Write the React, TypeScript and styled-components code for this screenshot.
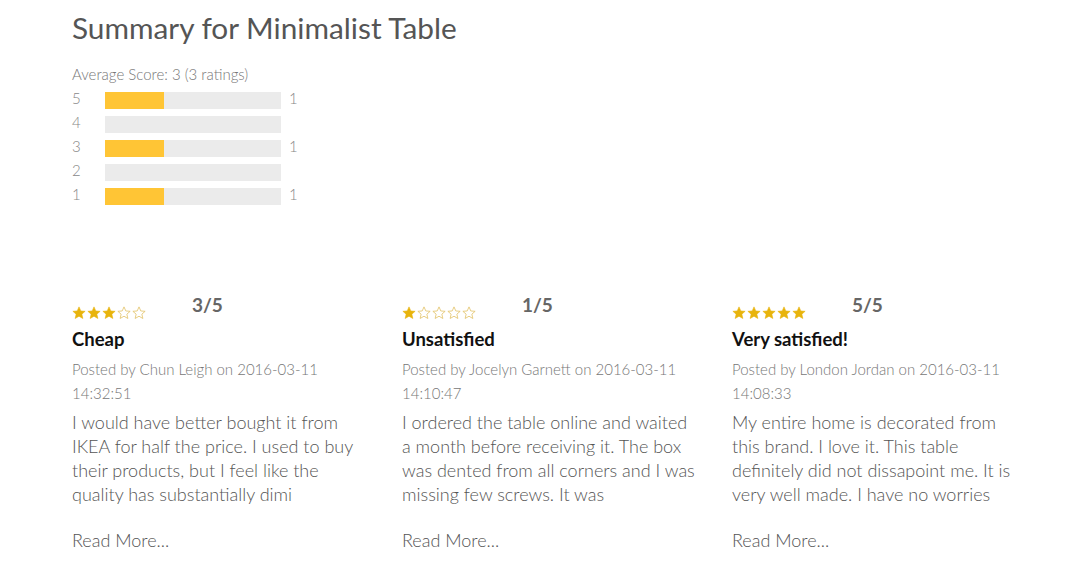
import React from "react";
import styled, { createGlobalStyle } from "styled-components";

const Global = createGlobalStyle`
  html, body { margin: 0; padding: 0; background: #fff; }
  body { font-family: Lato, "Open Sans", sans-serif; }
  * { box-sizing: border-box; }
`;

const Page = styled.div`
  padding: 8px 0 0 72px;
  width: 1083px;
`;

const Title = styled.h1`
  margin: 0;
  font-size: 29.8px;
  font-weight: 400;
  color: #555;
  line-height: 40px;
`;

const Summary = styled.section`
  margin-top: 18px;
  display: flex;
  flex-direction: column;
`;

const Avg = styled.div`
  font-size: 15px;
  font-weight: 300;
  color: #777;
  line-height: 16px;
  margin-bottom: 6px;
`;

const Row = styled.div`
  display: flex;
  align-items: center;
  height: 24px;
  font-size: 15px;
  font-weight: 300;
  color: #888;
`;

const Label = styled.span`
  width: 33px;
  padding-bottom: 5px;
`;

const Track = styled.div`
  width: 176px;
  height: 17px;
  background: #ebebeb;
  display: flex;
`;

const Fill = styled.div`
  height: 100%;
  background: #ffc535;
`;

const Count = styled.span`
  margin-left: 8px;
  padding-bottom: 5px;
`;

const Reviews = styled.section`
  margin-top: 87px;
  display: grid;
  grid-template-columns: repeat(3, 330px);
`;

const Card = styled.article`
  display: flex;
  flex-direction: column;
  width: 295px;
`;

const Head = styled.div`
  display: flex;
  align-items: flex-end;
  height: 26px;
`;

const Stars = styled.div`
  display: flex;
  gap: 1px;
  margin-bottom: 1px;
`;

const Score = styled.span`
  margin-left: 46px;
  font-size: 19px;
  font-weight: 700;
  color: #666;
  line-height: 24px;
  align-self: flex-start;
  margin-top: -2px;
`;

const ReviewTitle = styled.h3`
  margin: 5px 0 0;
  font-size: 18.5px;
  font-weight: 700;
  color: #111;
  line-height: 26px;
`;

const Meta = styled.div`
  margin-top: 5px;
  font-size: 15px;
  font-weight: 300;
  color: #777;
  line-height: 24px;
`;

const Body = styled.p`
  margin: 5px 0 0;
  font-size: 18px;
  font-weight: 300;
  color: #555;
  line-height: 24px;
`;

const More = styled.a`
  margin-top: 22px;
  font-size: 18px;
  font-weight: 300;
  color: #555;
  line-height: 24px;
  text-decoration: none;
`;

const Star = ({ filled }: { filled: boolean }) => (
  <svg width="14" height="14" viewBox="0 0 24 24">
    <path
      d="M12 1.5l3.1 7 7.4.6-5.6 4.9 1.7 7.4L12 17.5l-6.6 3.9 1.7-7.4L1.5 9.1l7.4-.6z"
      fill={filled ? "#e8b40c" : "none"}
      stroke={filled ? "#e8b40c" : "#e3c36a"}
      strokeWidth={filled ? 1 : 1.4}
      strokeLinejoin="round"
    />
  </svg>
);

const dist = [
  { n: 5, c: 1 },
  { n: 4, c: 0 },
  { n: 3, c: 1 },
  { n: 2, c: 0 },
  { n: 1, c: 1 },
];

const reviews = [
  {
    s: 3,
    title: "Cheap",
    by: "Chun Leigh",
    date: "2016-03-11 14:32:51",
    body: "I would have better bought it from IKEA for half the price. I used to buy their products, but I feel like the quality has substantially dimi",
  },
  {
    s: 1,
    title: "Unsatisfied",
    by: "Jocelyn Garnett",
    date: "2016-03-11 14:10:47",
    body: "I ordered the table online and waited a month before receiving it. The box was dented from all corners and I was missing few screws. It was",
  },
  {
    s: 5,
    title: "Very satisfied!",
    by: "London Jordan",
    date: "2016-03-11 14:08:33",
    body: "My entire home is decorated from this brand. I love it. This table definitely did not dissapoint me. It is very well made. I have no worries",
  },
];

export default function App() {
  return (
    <Page>
      <Global />
      <Title>Summary for Minimalist Table</Title>
      <Summary>
        <Avg>Average Score: 3 (3 ratings)</Avg>
        {dist.map((d) => (
          <Row key={d.n}>
            <Label>{d.n}</Label>
            <Track>
              <Fill style={{ width: `${(d.c / 3) * 100}%` }} />
            </Track>
            {d.c > 0 && <Count>{d.c}</Count>}
          </Row>
        ))}
      </Summary>
      <Reviews>
        {reviews.map((r) => (
          <Card key={r.title}>
            <Head>
              <Stars>
                {[1, 2, 3, 4, 5].map((i) => (
                  <Star key={i} filled={i <= r.s} />
                ))}
              </Stars>
              <Score>{`${r.s}/5`}</Score>
            </Head>
            <ReviewTitle>{r.title}</ReviewTitle>
            <Meta>{`Posted by ${r.by} on ${r.date}`}</Meta>
            <Body>{r.body}</Body>
            <More href="#">Read More...</More>
          </Card>
        ))}
      </Reviews>
    </Page>
  );
}
